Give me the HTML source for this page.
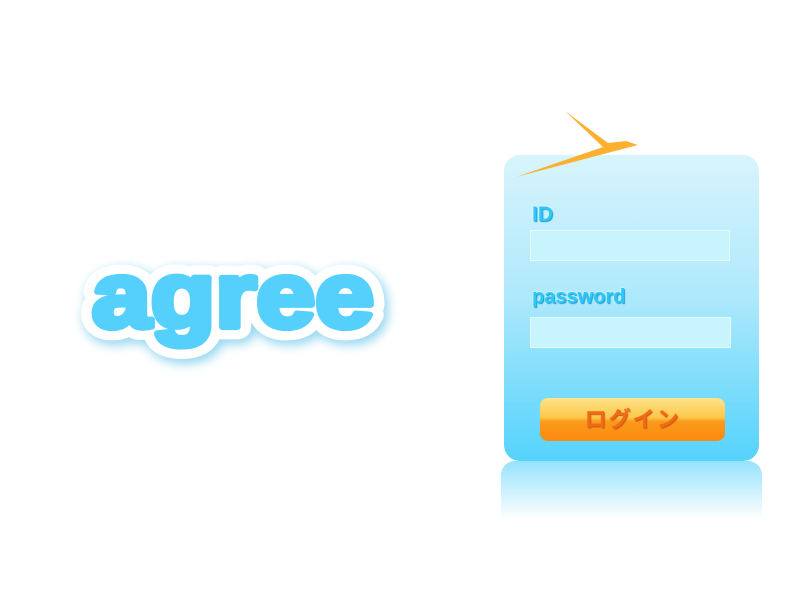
<!DOCTYPE html>
<html><head><meta charset="utf-8"><style>
body{margin:0;width:800px;height:600px;background:#fff;position:relative;overflow:hidden;font-family:"Liberation Sans","Noto Sans CJK JP",sans-serif}
.panel{position:absolute;left:504px;top:155px;width:255px;height:306px;border-radius:16px;background:linear-gradient(#d8f4fc,#b0e9fc 45%,#55d3fc)}
.refl{position:absolute;left:501px;top:461px;width:261px;height:58px;border-radius:14px 14px 0 0;background:linear-gradient(#95e2fc,rgba(255,255,255,0.95))}
.lbl{position:absolute;color:#2ec8f8;font-weight:bold;text-shadow:1px 1px 1px #1a9bd0,0 0 2px #fff}
.inp{position:absolute;background:#c8f4fd;border:1px solid #e6fbff;box-sizing:border-box}
.btn{position:absolute;left:540px;top:398px;width:185px;height:43px;border-radius:8px;background:linear-gradient(#fde48a,#fcc84a 45%,#fb9a1a 55%,#fb8a10);color:#f26a18;font-weight:bold;font-size:22px;text-align:center;line-height:43px;letter-spacing:2px;text-shadow:1px 1px 1px #c85a10}
</style></head><body>
<svg width="400" height="400" style="position:absolute;left:0;top:200px">
<defs><filter id="g" x="-20%" y="-40%" width="140%" height="180%"><feGaussianBlur stdDeviation="5"/></filter></defs>
<g transform="translate(0,127) scale(1,1.03)">
<text x="92" y="0" font-family="Liberation Sans" font-weight="bold" font-size="90" textLength="282" lengthAdjust="spacingAndGlyphs" stroke="#9ad8f0" stroke-width="26" stroke-linejoin="round" fill="#9ad8f0" filter="url(#g)" transform="translate(3,4)">agree</text>
<text x="92" y="0" font-family="Liberation Sans" font-weight="bold" font-size="90" textLength="282" lengthAdjust="spacingAndGlyphs" stroke="#fff" stroke-width="24" stroke-linejoin="round" fill="#fff">agree</text>
<text x="92" y="0" font-family="Liberation Sans" font-weight="bold" font-size="90" textLength="282" lengthAdjust="spacingAndGlyphs" fill="#55d0fc" stroke="#55d0fc" stroke-width="6" stroke-linejoin="round">agree</text>
</g>
</svg>
<div class="refl"></div>
<div class="panel"></div>
<svg width="160" height="90" style="position:absolute;left:505px;top:105px">
<path d="M11 72 L98 42 L60 6 L103 38 L121 36 L133 40 Z" fill="#fbb030"/>
</svg>
<div class="lbl" style="left:532px;top:203px;font-size:21px">ID</div>
<div class="inp" style="left:530px;top:230px;width:200px;height:31px"></div>
<div class="lbl" style="left:532px;top:286px;font-size:20px">password</div>
<div class="inp" style="left:530px;top:317px;width:201px;height:31px"></div>
<div class="btn">ログイン</div>
</body></html>
